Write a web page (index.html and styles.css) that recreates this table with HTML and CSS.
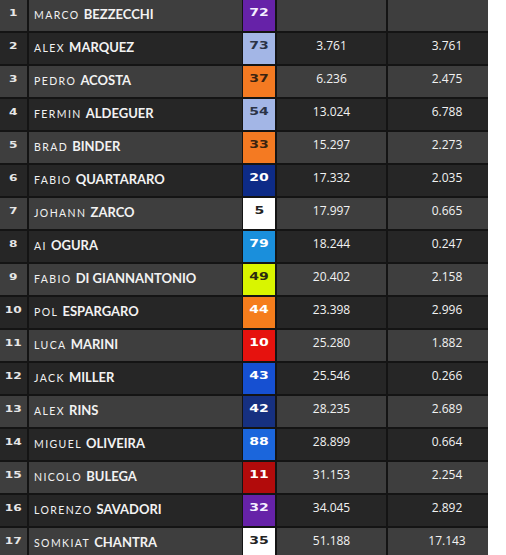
FILE: index.html
```html
<!DOCTYPE html>
<html>
<head>
<meta charset="utf-8">
<link rel="stylesheet" href="styles.css">
</head>
<body>
<table class="results">
<tbody>
<tr class="odd"><td class="pos"><span class="wide">1</span></td><td class="name"><span class="first">MARCO</span> <span class="last">BEZZECCHI</span></td><td class="num n-purple"><span class="wide">72</span></td><td class="time"></td><td class="gap"></td></tr>
<tr class="even"><td class="pos"><span class="wide">2</span></td><td class="name"><span class="first">ALEX</span> <span class="last">MARQUEZ</span></td><td class="num n-lightblue"><span class="wide">73</span></td><td class="time">3.761</td><td class="gap">3.761</td></tr>
<tr class="odd"><td class="pos"><span class="wide">3</span></td><td class="name"><span class="first">PEDRO</span> <span class="last">ACOSTA</span></td><td class="num n-orange"><span class="wide">37</span></td><td class="time">6.236</td><td class="gap">2.475</td></tr>
<tr class="even"><td class="pos"><span class="wide">4</span></td><td class="name"><span class="first">FERMIN</span> <span class="last">ALDEGUER</span></td><td class="num n-lightblue"><span class="wide">54</span></td><td class="time">13.024</td><td class="gap">6.788</td></tr>
<tr class="odd"><td class="pos"><span class="wide">5</span></td><td class="name"><span class="first">BRAD</span> <span class="last">BINDER</span></td><td class="num n-orange"><span class="wide">33</span></td><td class="time">15.297</td><td class="gap">2.273</td></tr>
<tr class="even"><td class="pos"><span class="wide">6</span></td><td class="name"><span class="first">FABIO</span> <span class="last">QUARTARARO</span></td><td class="num n-navy"><span class="wide">20</span></td><td class="time">17.332</td><td class="gap">2.035</td></tr>
<tr class="odd"><td class="pos"><span class="wide">7</span></td><td class="name"><span class="first">JOHANN</span> <span class="last">ZARCO</span></td><td class="num n-white"><span class="wide">5</span></td><td class="time">17.997</td><td class="gap">0.665</td></tr>
<tr class="even"><td class="pos"><span class="wide">8</span></td><td class="name"><span class="first">AI</span> <span class="last">OGURA</span></td><td class="num n-sky"><span class="wide">79</span></td><td class="time">18.244</td><td class="gap">0.247</td></tr>
<tr class="odd"><td class="pos"><span class="wide">9</span></td><td class="name"><span class="first">FABIO</span> <span class="last">DI GIANNANTONIO</span></td><td class="num n-lime"><span class="wide">49</span></td><td class="time">20.402</td><td class="gap">2.158</td></tr>
<tr class="even"><td class="pos"><span class="wide">10</span></td><td class="name"><span class="first">POL</span> <span class="last">ESPARGARO</span></td><td class="num n-orange2"><span class="wide">44</span></td><td class="time">23.398</td><td class="gap">2.996</td></tr>
<tr class="odd"><td class="pos"><span class="wide">11</span></td><td class="name"><span class="first">LUCA</span> <span class="last">MARINI</span></td><td class="num n-red"><span class="wide">10</span></td><td class="time">25.280</td><td class="gap">1.882</td></tr>
<tr class="even"><td class="pos"><span class="wide">12</span></td><td class="name"><span class="first">JACK</span> <span class="last">MILLER</span></td><td class="num n-blue"><span class="wide">43</span></td><td class="time">25.546</td><td class="gap">0.266</td></tr>
<tr class="odd"><td class="pos"><span class="wide">13</span></td><td class="name"><span class="first">ALEX</span> <span class="last">RINS</span></td><td class="num n-navy2"><span class="wide">42</span></td><td class="time">28.235</td><td class="gap">2.689</td></tr>
<tr class="even"><td class="pos"><span class="wide">14</span></td><td class="name"><span class="first">MIGUEL</span> <span class="last">OLIVEIRA</span></td><td class="num n-blue2"><span class="wide">88</span></td><td class="time">28.899</td><td class="gap">0.664</td></tr>
<tr class="odd"><td class="pos"><span class="wide">15</span></td><td class="name"><span class="first">NICOLO</span> <span class="last">BULEGA</span></td><td class="num n-darkred"><span class="wide">11</span></td><td class="time">31.153</td><td class="gap">2.254</td></tr>
<tr class="even"><td class="pos"><span class="wide">16</span></td><td class="name"><span class="first">LORENZO</span> <span class="last">SAVADORI</span></td><td class="num n-purple"><span class="wide">32</span></td><td class="time">34.045</td><td class="gap">2.892</td></tr>
<tr class="odd"><td class="pos"><span class="wide">17</span></td><td class="name"><span class="first">SOMKIAT</span> <span class="last">CHANTRA</span></td><td class="num n-white"><span class="wide">35</span></td><td class="time">51.188</td><td class="gap">17.143</td></tr>
</tbody>
</table>
</body>
</html>
```
FILE: styles.css
```css
html, body {
  margin: 0;
  padding: 0;
  background: #ffffff;
}

.results {
  border-collapse: separate;
  border-spacing: 0;
  font-family: "Open Sans", "Noto Sans", sans-serif;
  color: #f2f2f2;
}

.results td {
  padding: 0 0 6px 0;
  box-sizing: border-box;
  border-bottom: 2px solid #141414;
  border-right: 2px solid #141414;
  vertical-align: middle;
  white-space: nowrap;
  height: 33px;
}

.odd td { background: #3e3e3e; }
.even td { background: #262626; }

.results .pos {
  width: 29px;
  text-align: center;
  font-family: "DejaVu Sans", sans-serif;
  font-weight: bold;
  font-size: 9px;
  color: #e6e6e6;
}

.wide {
  display: inline-block;
  transform: scaleX(1.35);
}

.results .name {
  width: 214px;
  padding-left: 5px;
  border-right: 1px solid #141414;
  font-family: "Lato", "Open Sans", sans-serif;
}

.first {
  font-size: 10.5px;
  font-weight: 400;
  letter-spacing: 1.4px;
}

.last {
  font-size: 13px;
  font-weight: 700;
}

.results .num {
  width: 34px;
  text-align: center;
  font-family: "DejaVu Sans", sans-serif;
  font-weight: bold;
  font-size: 10px;
}

.num .wide { transform: scaleX(1.4); }

.results .time {
  width: 111px;
  text-align: center;
  font-size: 12px;
}

.results .gap {
  width: 100px;
  text-align: center;
  font-size: 12px;
  padding-left: 18px;
  border-right: none;
}

.results .n-purple { background: #6622a8; color: #f4f0ff; }
.results .n-lightblue { background: #a3b6e6; color: #2b3346; }
.results .n-orange { background: #f47a22; color: #3a2310; }
.results .n-orange2 { background: #f57d1c; color: #ffffff; }
.results .n-navy { background: #0d2b87; color: #ffffff; }
.results .n-white { background: #ffffff; color: #222222; }
.results .n-sky { background: #1a8fdc; color: #ffffff; }
.results .n-lime { background: #d9f500; color: #2a2a10; }
.results .n-red { background: #e6120e; color: #ffffff; }
.results .n-blue { background: #1650d2; color: #ffffff; }
.results .n-navy2 { background: #163080; color: #ffffff; }
.results .n-blue2 { background: #1b66dc; color: #ffffff; }
.results .n-darkred { background: #b20b0b; color: #ffffff; }
```
